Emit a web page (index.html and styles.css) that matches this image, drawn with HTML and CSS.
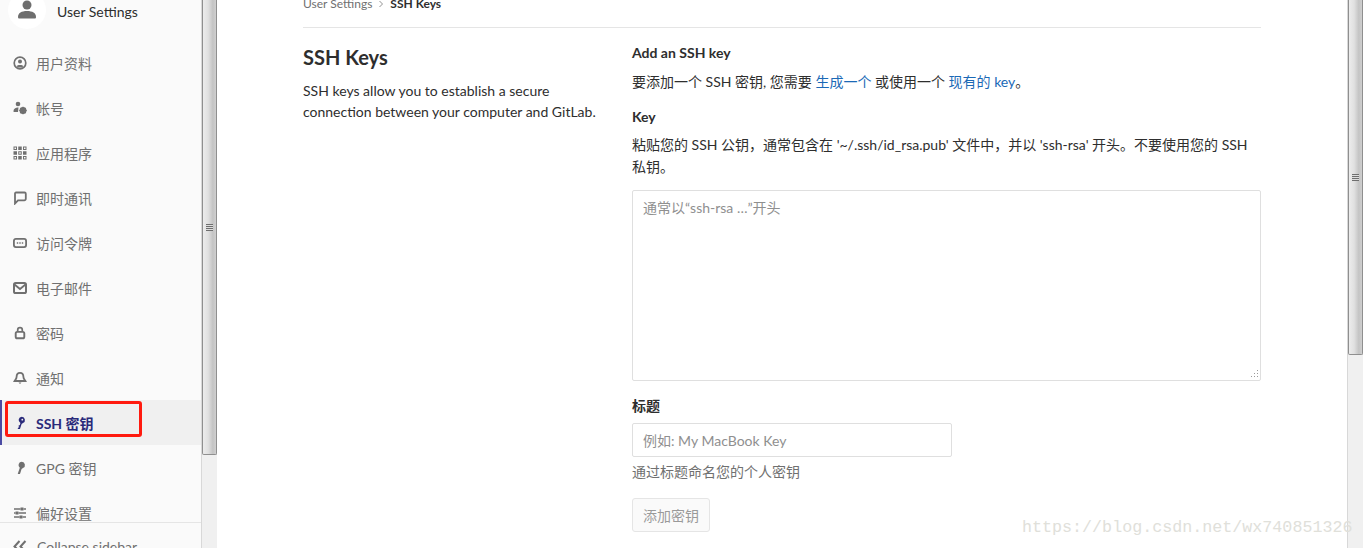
FILE: index.html
```html
<!DOCTYPE html>
<html lang="zh">
<head>
<meta charset="utf-8">
<title>SSH Keys</title>
<link rel="stylesheet" href="styles.css">
</head>
<body>
<div class="page">
  <aside class="sidebar">
    <div class="nav-col">
      <nav class="nav">
        <div class="context">
          <span class="avatar">
            <svg width="26" height="26" viewBox="0 0 26 26"><circle cx="13" cy="8" r="4.500" fill="#6e6e6e"/><path d="M4 20c0-4 3.500-6 9-6s9 2 9 6c0 1-.5 1.500-1.500 1.500h-15C4.500 21.500 4 21 4 20z" fill="#6e6e6e"/></svg>
          </span>
          <span class="context-name">User Settings</span>
        </div>
        <ul class="menu">
          <li class="item"><svg class="ico" viewBox="0 0 14 14"><circle cx="7" cy="7" r="5.800" fill="none" stroke="#707070" stroke-width="1.700"/><circle cx="7" cy="5.500" r="2" fill="#707070"/><path d="M3.500 10c1-1.500 6-1.500 7 0l-1.500 1.500h-4z" fill="#707070"/></svg>用户资料</li>
          <li class="item"><svg class="ico" viewBox="0 0 14 14"><circle cx="5" cy="3" r="2.300" fill="#707070"/><path d="M.5 10.500C.5 7.500 2.500 6.500 5.500 6.500L5 11H1.500C1 11 .5 11 .5 10.500z" fill="#707070"/><circle cx="10" cy="9.500" r="2.500" fill="none" stroke="#707070" stroke-width="2"/><path d="M10 5.800v7.400M6.300 9.500h7.400M7.500 7l5 5M12.500 7l-5 5" stroke="#707070" stroke-width="1.200"/></svg>帐号</li>
          <li class="item"><svg class="ico" viewBox="0 0 14 14"><path d="M.5 .5h3.500v3.500H.5zM5.250 .5h3.500v3.500h-3.500zM10 .5h3.500v3.500H10zM.5 5.250h3.500v3.500H.5zM5.250 5.250h3.500v3.500h-3.500zM10 5.250h3.500v3.500H10zM.5 10h3.500v3.500H.5zM5.250 10h3.500v3.500h-3.500zM10 10h3.500v3.500H10z" fill="#707070"/><path d="M1.500 1.500h1.500v1.500H1.500zM11 1.500h1.500v1.500H11zM6.250 6.250h1.500v1.500h-1.500zM1.500 11h1.500v1.500H1.500zM11 11h1.500v1.500H11z" fill="#fafafa"/></svg>应用程序</li>
          <li class="item"><svg class="ico" viewBox="0 0 14 14"><path d="M3 1.500h8.500a1.300 1.300 0 0 1 1.300 1.300v5a1.500 1.500 0 0 1-1.500 1.500H5L2 12.500V2.500a1 1 0 0 1 1-1z" fill="none" stroke="#707070" stroke-width="1.800"/></svg>即时通讯</li>
          <li class="item"><svg class="ico" viewBox="0 0 14 14"><rect x=".9" y="2.900" width="12.200" height="8.200" rx="2" fill="none" stroke="#707070" stroke-width="1.800"/><path d="M3.800 6.200h1.400v1.600H3.800zM6.300 6.200h1.400v1.600H6.300zM8.800 6.200h1.400v1.600H8.800z" fill="#707070"/></svg>访问令牌</li>
          <li class="item"><svg class="ico" viewBox="0 0 14 14"><rect x="1" y="1.900" width="12" height="10.200" rx="1.600" fill="none" stroke="#707070" stroke-width="2"/><path d="M1.500 3.500L7 8l5.500-4.500" fill="none" stroke="#707070" stroke-width="1.800"/></svg>电子邮件</li>
          <li class="item"><svg class="ico" viewBox="0 0 14 14"><rect x="2.700" y="5.900" width="8.600" height="6.400" rx="1.600" fill="none" stroke="#707070" stroke-width="1.900"/><path d="M4.700 6V4a2.300 2.300 0 0 1 4.600 0v2" fill="none" stroke="#707070" stroke-width="1.700"/></svg>密码</li>
          <li class="item"><svg class="ico" viewBox="0 0 14 14"><path d="M7 1.800c2.400 0 3.400 1.800 3.400 4 0 2.200 1.300 3 2 4.200H1.600c.7-1.200 2-2 2-4.200 0-2.200 1-4 3.400-4z" fill="none" stroke="#707070" stroke-width="1.800"/><path d="M5.500 11.500h3L7 13z" fill="#707070"/></svg>通知</li>
          <li class="item active"><svg class="ico" viewBox="0 0 14 14"><path d="M8.800 .8a3.300 3.300 0 0 1 1.200 6.300L8.600 8 7 13H4.700l.4-1.500h1v-1H5.500l.3-1.200h1l.6-2.300A3.300 3.300 0 0 1 8.800 .8z" fill="#2a2a7a"/><circle cx="9.300" cy="3.700" r=".9" fill="#f0f0f0"/></svg>SSH 密钥<span class="annotation"></span></li>
          <li class="item"><svg class="ico" viewBox="0 0 14 14"><path d="M8.800 .8a3.300 3.300 0 0 1 1.200 6.300L8.600 8 7 13H4.700l2.100-6.300A3.300 3.300 0 0 1 8.800 .8z" fill="#707070"/></svg>GPG 密钥</li>
          <li class="item"><svg class="ico" viewBox="0 0 14 14"><path d="M1 3h6.500M10.500 3H13M1 7h1.500M5.500 7H13M1 11h5.500M9.500 11H13" stroke="#707070" stroke-width="1.600"/><path d="M7.500 1.500h3v3h-3zM2.500 5.500h3v3h-3zM6.500 9.500h3v3h-3z" fill="#707070"/></svg>偏好设置</li>
        </ul>
      </nav>
      <div class="collapse">
        <svg class="ico" viewBox="0 0 14 14"><path d="M6.500 2L1.500 7.500l5 5M12.500 2l-5 5.500 5 5" fill="none" stroke="#707070" stroke-width="2"/></svg>Collapse sidebar
      </div>
    </div>
    <div class="scrollbar side-bar"><div class="thumb side-thumb"><span class="grip"></span></div></div>
  </aside>
  <main class="main">
    <div class="content">
      <div class="crumbs"><span class="crumb-link">User Settings</span><svg class="crumb-sep" width="6" height="8" viewBox="0 0 6 8"><path d="M1.500 1l3 3-3 3" fill="none" stroke="#939393" stroke-width="1"/></svg><span class="crumb-now">SSH Keys</span></div>
      <div class="row">
        <section class="intro">
          <h1 class="title">SSH Keys</h1>
          <p class="lead">SSH keys allow you to establish a secure connection between your computer and GitLab.</p>
        </section>
        <section class="form">
          <h2 class="form-head">Add an SSH key</h2>
          <p class="line">要添加一个 SSH 密钥, 您需要 <a class="link">生成一个</a> 或使用一个 <a class="link">现有的 key</a>。</p>
          <label class="field-label key-label">Key</label>
          <p class="hint">粘贴您的 SSH 公钥，通常包含在 '~/.ssh/id_rsa.pub' 文件中，并以 'ssh-rsa' 开头。不要使用您的 SSH 私钥。</p>
          <div class="textarea"><span class="ph">通常以“ssh-rsa …”开头</span>
            <svg class="resize" width="11" height="11" viewBox="0 0 11 11"><path d="M8 1h1v1H8zM8 4h1v1H8zM5 4h1v1H5zM8 7h1v1H8zM5 7h1v1H5zM2 7h1v1H2z" fill="#9a9a9a"/></svg>
          </div>
          <label class="field-label title-label">标题</label>
          <div class="input"><span class="ph">例如: My MacBook Key</span></div>
          <p class="help">通过标题命名您的个人密钥</p>
          <div class="btn">添加密钥</div>
        </section>
      </div>
    </div>
    <div class="scrollbar main-bar"><div class="thumb main-thumb"><span class="grip"></span></div></div>
  </main>
</div>
<div class="watermark">https://blog.csdn.net/wx740851326</div>
</body>
</html>
```
FILE: styles.css
```css
* { box-sizing: border-box; }
html, body { margin: 0; height: 548px; overflow: hidden; background: #fff; }
body { font-family: Lato, "Noto Sans CJK SC", sans-serif; font-size: 14px; color: #2e2e2e; }
.page { display: flex; height: 548px; }
.sidebar { width: 217px; flex: none; display: flex; background: #fafafa; }
.nav-col { width: 201px; flex: none; display: flex; flex-direction: column; height: 548px; }
.nav { height: 522px; overflow: hidden; }
.context { display: flex; align-items: center; height: 22px; padding-left: 8px; gap: 11px; }
.avatar { width: 38px; height: 38px; margin-top: -9px; align-self: flex-start; flex: none; border-radius: 50%; background: #fff; display: flex; align-items: center; justify-content: center; }
.context-name { color: #2e2e2e; font-size: 14px; }
.menu { list-style: none; margin: 0; padding: 18px 0 0; }
.item { position: relative; height: 45px; display: flex; align-items: center; padding-left: 13px; color: #707070; gap: 9px; white-space: nowrap; }
.ico { width: 14px; height: 14px; flex: none; }
.active { background: #f0f0f0; color: #2a2a7a; font-weight: 700; border-left: 2px solid #4b4ba3; padding-left: 11px; }
.annotation { position: absolute; left: 3px; top: 1px; width: 137px; height: 36px; border: 3px solid #ff1a0f; border-radius: 3px; }
.collapse { border-top: 1px solid #e5e5e5; height: 26px; padding: 21px 0 0 13px; display: flex; gap: 10px; align-items: center; color: #707070; white-space: nowrap; }
.scrollbar { width: 16px; flex: none; height: 548px; background: #f0f0f0; border-left: 1px solid #d8d8d8; }
.thumb { display: flex; align-items: center; justify-content: center; width: 15px; border: 1px solid #8f8f8f; border-top: 0; border-radius: 0 0 2px 2px; background: linear-gradient(90deg, #ececec 0%, #e0e0e0 40%, #c4c4c4 75%, #cfcfcf 100%); }
.side-thumb { height: 455px; }
.main-thumb { height: 355px; }
.grip { width: 7px; height: 7px; background: repeating-linear-gradient(180deg, #6e6e6e 0 1px, #ddd 1px 2px); }
.main { flex: 1; min-width: 0; display: flex; justify-content: space-between; }
.content { width: 958px; margin-left: 86px; }
.crumbs { margin-top: -8px; border-bottom: 1px solid #e5e5e5; height: 36px; display: flex; align-items: center; padding-bottom: 12px; font-size: 12px; gap: 6px; }
.crumb-link { color: #707070; }
.crumb-now { color: #2e2e2e; font-weight: 700; }
.row { display: flex; padding-top: 13px; }
.intro { width: 329px; flex: none; }
.title { margin: -1px 0 0; font-size: 20px; line-height: 34px; font-weight: 700; color: #2e2e2e; }
.lead { margin: 6px 0 0; line-height: 21px; width: 300px; }
.form { width: 629px; }
.form-head { margin: 3px 0 0; font-size: 14px; line-height: 18px; font-weight: 700; }
.line { margin: 9px 0 0; line-height: 21px; }
.link { color: #1b69b6; }
.field-label { display: block; font-weight: 700; line-height: 18px; }
.key-label { margin-top: 16px; }
.hint { margin: 8px 0 0; line-height: 22px; }
.textarea { position: relative; margin-top: 12px; height: 191px; border: 1px solid #dfdfdf; border-radius: 2px; padding: 7px 10px; background: #fff; }
.ph { color: #8f8f8f; line-height: 20px; }
.resize { position: absolute; right: 0; bottom: 0; }
.title-label { margin-top: 16px; }
.input { margin-top: 8px; width: 320px; height: 34px; border: 1px solid #dfdfdf; border-radius: 2px; padding: 7px 10px 5px; }
.help { margin: 6px 0 0; color: #707070; line-height: 18px; }
.btn { margin-top: 17px; width: 78px; height: 34px; border: 1px solid #e5e5e5; border-radius: 3px; background: #fafafa; color: #9a9a9a; display: flex; align-items: center; justify-content: center; }
.watermark { position: absolute; left: 1022px; top: 518px; font-family: "Liberation Mono", monospace; font-size: 16.700px; color: #e0e0da; white-space: nowrap; }
```
